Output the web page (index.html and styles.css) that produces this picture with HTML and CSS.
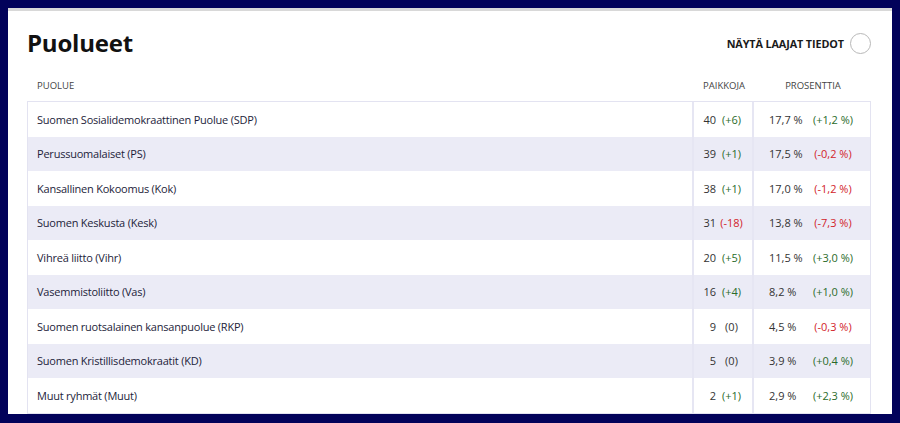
FILE: index.html
```html
<!DOCTYPE html>
<html lang="fi">
<head>
<meta charset="utf-8">
<link rel="stylesheet" href="styles.css">
</head>
<body>
<div class="panel">
  <div class="head">
    <h1 class="title">Puolueet</h1>
    <div class="toggle">
      <span class="toggle-label">NÄYTÄ LAAJAT TIEDOT</span>
      <span class="toggle-circle"></span>
    </div>
  </div>
  <div class="colhead">
    <div class="c-party">PUOLUE</div>
    <div class="c-seats">PAIKKOJA</div>
    <div class="c-pct">PROSENTTIA</div>
  </div>
  <div class="table">
    <div class="row"><div class="c-party">Suomen Sosialidemokraattinen Puolue (SDP)</div><div class="c-seats"><span class="num">40</span><span class="chg pos">(+6)</span></div><div class="c-pct"><span class="pv">17,7 %</span><span class="pc pos">(+1,2 %)</span></div></div>
    <div class="row alt"><div class="c-party">Perussuomalaiset (PS)</div><div class="c-seats"><span class="num">39</span><span class="chg pos">(+1)</span></div><div class="c-pct"><span class="pv">17,5 %</span><span class="pc neg">(-0,2 %)</span></div></div>
    <div class="row"><div class="c-party">Kansallinen Kokoomus (Kok)</div><div class="c-seats"><span class="num">38</span><span class="chg pos">(+1)</span></div><div class="c-pct"><span class="pv">17,0 %</span><span class="pc neg">(-1,2 %)</span></div></div>
    <div class="row alt"><div class="c-party">Suomen Keskusta (Kesk)</div><div class="c-seats"><span class="num">31</span><span class="chg neg">(-18)</span></div><div class="c-pct"><span class="pv">13,8 %</span><span class="pc neg">(-7,3 %)</span></div></div>
    <div class="row"><div class="c-party">Vihreä liitto (Vihr)</div><div class="c-seats"><span class="num">20</span><span class="chg pos">(+5)</span></div><div class="c-pct"><span class="pv">11,5 %</span><span class="pc pos">(+3,0 %)</span></div></div>
    <div class="row alt"><div class="c-party">Vasemmistoliitto (Vas)</div><div class="c-seats"><span class="num">16</span><span class="chg pos">(+4)</span></div><div class="c-pct"><span class="pv">8,2 %</span><span class="pc pos">(+1,0 %)</span></div></div>
    <div class="row"><div class="c-party">Suomen ruotsalainen kansanpuolue (RKP)</div><div class="c-seats"><span class="num">9</span><span class="chg">(0)</span></div><div class="c-pct"><span class="pv">4,5 %</span><span class="pc neg">(-0,3 %)</span></div></div>
    <div class="row alt"><div class="c-party">Suomen Kristillisdemokraatit (KD)</div><div class="c-seats"><span class="num">5</span><span class="chg">(0)</span></div><div class="c-pct"><span class="pv">3,9 %</span><span class="pc pos">(+0,4 %)</span></div></div>
    <div class="row"><div class="c-party">Muut ryhmät (Muut)</div><div class="c-seats"><span class="num">2</span><span class="chg pos">(+1)</span></div><div class="c-pct"><span class="pv">2,9 %</span><span class="pc pos">(+2,3 %)</span></div></div>
  </div>
</div>
</body>
</html>
```

FILE: styles.css
```css
* { box-sizing: border-box; }
html {
  background: #02025a;
  height: 100%;
  overflow: hidden;
}
body {
  margin: 8px;
  font-family: "Open Sans", "Noto Sans", sans-serif;
  color: #222;
}
.panel {
  background: #fff;
  border-top: 3px solid #d8d8d8;
  height: 406px;
  overflow: hidden;
  padding: 0 21px 0 19px;
}
.head {
  display: flex;
  justify-content: space-between;
  align-items: center;
  height: 58px;
  padding-top: 5px;
}
.title {
  margin: 0;
  font-size: 24px;
  font-weight: 700;
  color: #111;
  letter-spacing: -0.2px;
}
.toggle {
  display: flex;
  align-items: center;
  gap: 6px;
  padding-top: 2px;
}
.toggle-label {
  font-size: 10.8px;
  font-weight: 700;
  color: #1a1a1a;
  letter-spacing: -0.1px;
}
.toggle-circle {
  width: 21px;
  height: 21px;
  border: 1.5px solid #b8b8b8;
  border-radius: 50%;
}
.colhead {
  display: flex;
  height: 32px;
  align-items: center;
  font-size: 9.5px;
  color: #444;
}
.colhead .c-party { padding-left: 10px; }
.colhead .c-seats, .colhead .c-pct { text-align: center; }
.c-party { flex: 1; }
.c-seats { width: 62px; flex: none; }
.c-pct { width: 116px; flex: none; }
.table {
  border: 1px solid #e3e3f1;
}
.row {
  display: flex;
  height: 34.5px;
  align-items: stretch;
  font-size: 11px;
  color: #1d1d3a;
  white-space: nowrap;
}
.row.alt { background: #ebebf6; }
.row .c-party {
  display: flex;
  align-items: center;
  padding-left: 9px;
  letter-spacing: -0.22px;
}
.row .c-seats {
  display: flex;
  align-items: center;
  border-left: 2px solid #e6e6f3;
  border-right: 2px solid #e6e6f3;
  color: #333;
}
.num {
  flex: none;
  width: 22px;
  text-align: right;
}
.chg {
  flex: none;
  width: 31px;
  text-align: center;
}
.row .c-pct {
  display: flex;
  align-items: center;
  padding-left: 15px;
  color: #333;
}
.pv { flex: none; width: 42px; }
.pc { flex: none; width: 44px; text-align: center; }
.pos { color: #2a6b2a; }
.neg { color: #d2232a; }
```
